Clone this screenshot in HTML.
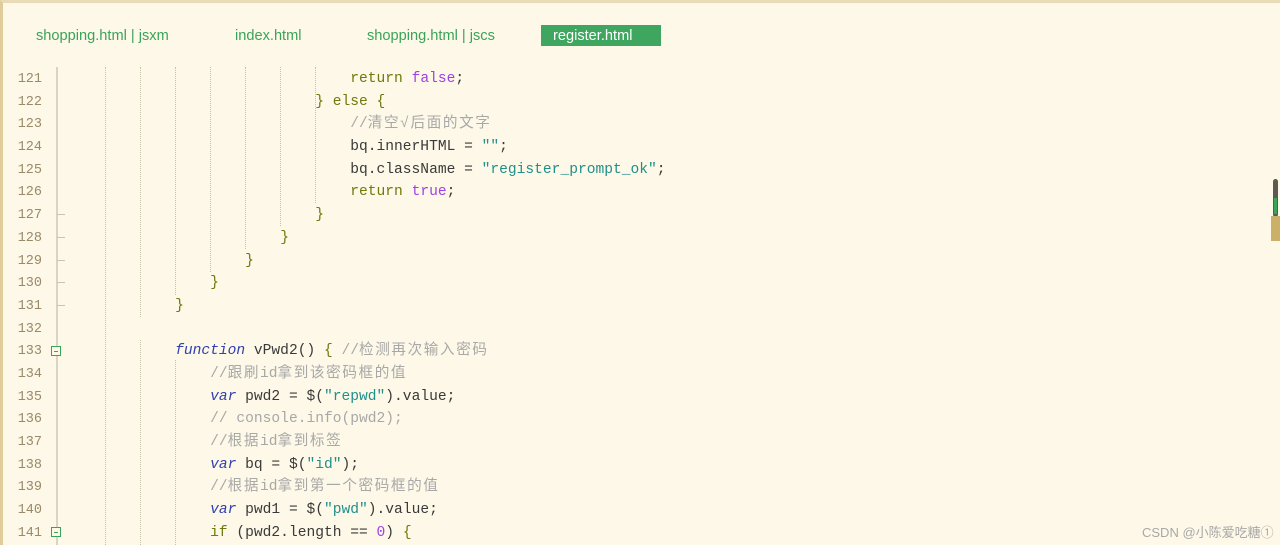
<!DOCTYPE html>
<html><head><meta charset="utf-8"><style>
body{margin:0;width:1280px;height:545px;background:#fdf8e7;overflow:hidden;position:relative;font-family:"Liberation Mono","Noto Sans CJK SC",monospace;}
.frame{position:absolute;left:0;top:0;width:1280px;height:545px;border-top:3px solid #e8dcb8;border-left:3px solid #e0cc98;box-sizing:border-box}
.tab{position:absolute;top:25px;height:21px;line-height:21px;font:14.6px "Liberation Sans","Noto Sans CJK SC",sans-serif;color:#3aa35a}
.tab span{position:relative;top:3px}
.tab.a{background:#3ea65e;color:#fff;padding:0 12px;left:541px;width:96px}
.ln{position:absolute;left:0;width:42px;text-align:right;font-size:13.5px;color:#9a8a6a;height:23px;line-height:23px}
.code{position:absolute;left:70px;font-size:14.6px;height:23px;line-height:23px;white-space:pre;color:#3a3a3a}
.g{position:absolute;width:0;border-left:1px dotted #c8c0a8}
.k{color:#6d7a0c}.p{color:#a040e8}.s{color:#20908a}.c{color:#a8a8a8}.f{color:#3040b0;font-style:italic}.b{color:#6d7a0c}
.z{letter-spacing:1.6px}
.gut{position:absolute;left:56px;top:67px;width:2px;height:478px;background:#d8d4c8}
.tick{position:absolute;left:57px;width:8px;height:1px;background:#c8c4b8}
.fold{position:absolute;left:51px;width:10px;height:10px;border:1px solid #3aa35a;box-sizing:border-box;background:#fdf8e7}
.fold:after{content:"";position:absolute;left:2px;top:3.5px;width:4px;height:1px;background:#3aa35a}
</style></head><body>
<div class="frame"></div>
<div class="tab" style="left:36px"><span>shopping.html | jsxm</span></div>
<div class="tab" style="left:235px"><span>index.html</span></div>
<div class="tab" style="left:367px"><span>shopping.html | jscs</span></div>
<div class="tab a"><span>register.html</span></div>
<div class="gut"></div>
<div class="g" style="left:105px;top:67px;height:478px"></div>
<div class="g" style="left:140px;top:67px;height:250px"></div>
<div class="g" style="left:140px;top:340px;height:205px"></div>
<div class="g" style="left:175px;top:67px;height:228px"></div>
<div class="g" style="left:175px;top:360px;height:185px"></div>
<div class="g" style="left:210px;top:67px;height:205px"></div>
<div class="g" style="left:245px;top:67px;height:182px"></div>
<div class="g" style="left:280px;top:67px;height:159px"></div>
<div class="g" style="left:315px;top:67px;height:136px"></div>

<div class="ln" style="top:68px">121</div><div class="code" style="top:68px">                                <span class="k">return</span> <span class="p">false</span>;</div>
<div class="ln" style="top:91px">122</div><div class="code" style="top:91px">                            <span class="b">}</span> <span class="k">else</span> <span class="b">{</span></div>
<div class="ln" style="top:113px">123</div><div class="code" style="top:113px">                                <span class="c">//<span class="z">清空√后面的文字</span></span></div>
<div class="ln" style="top:136px">124</div><div class="code" style="top:136px">                                bq.innerHTML = <span class="s">""</span>;</div>
<div class="ln" style="top:159px">125</div><div class="code" style="top:159px">                                bq.className = <span class="s">"register_prompt_ok"</span>;</div>
<div class="ln" style="top:181px">126</div><div class="code" style="top:181px">                                <span class="k">return</span> <span class="p">true</span>;</div>
<div class="ln" style="top:204px">127</div><div class="code" style="top:204px">                            <span class="b">}</span></div>
<div class="ln" style="top:227px">128</div><div class="code" style="top:227px">                        <span class="b">}</span></div>
<div class="ln" style="top:250px">129</div><div class="code" style="top:250px">                    <span class="b">}</span></div>
<div class="ln" style="top:272px">130</div><div class="code" style="top:272px">                <span class="b">}</span></div>
<div class="ln" style="top:295px">131</div><div class="code" style="top:295px">            <span class="b">}</span></div>
<div class="ln" style="top:318px">132</div>
<div class="ln" style="top:340px">133</div><div class="code" style="top:340px">            <span class="f">function</span> vPwd2() <span class="b">{</span> <span class="c">//<span class="z">检测再次输入密码</span></span></div>
<div class="ln" style="top:363px">134</div><div class="code" style="top:363px">                <span class="c">//<span class="z">跟刷</span>id<span class="z">拿到该密码框的值</span></span></div>
<div class="ln" style="top:386px">135</div><div class="code" style="top:386px">                <span class="f">var</span> pwd2 = $(<span class="s">"repwd"</span>).value;</div>
<div class="ln" style="top:408px">136</div><div class="code" style="top:408px">                <span class="c">// console.info(pwd2);</span></div>
<div class="ln" style="top:431px">137</div><div class="code" style="top:431px">                <span class="c">//<span class="z">根据</span>id<span class="z">拿到标签</span></span></div>
<div class="ln" style="top:454px">138</div><div class="code" style="top:454px">                <span class="f">var</span> bq = $(<span class="s">"id"</span>);</div>
<div class="ln" style="top:476px">139</div><div class="code" style="top:476px">                <span class="c">//<span class="z">根据</span>id<span class="z">拿到第一个密码框的值</span></span></div>
<div class="ln" style="top:499px">140</div><div class="code" style="top:499px">                <span class="f">var</span> pwd1 = $(<span class="s">"pwd"</span>).value;</div>
<div class="ln" style="top:522px">141</div><div class="code" style="top:522px">                <span class="k">if</span> (pwd2.length == <span class="p">0</span>) <span class="b">{</span></div>

<div class="tick" style="top:214px"></div><div class="tick" style="top:237px"></div><div class="tick" style="top:260px"></div><div class="tick" style="top:282px"></div><div class="tick" style="top:305px"></div>
<div class="fold" style="top:346px"></div><div class="fold" style="top:527px"></div>

<div style="position:absolute;left:1273px;top:179px;width:5px;height:38px;background:#5a5a52;border-radius:3px"></div>
<div style="position:absolute;left:1274px;top:198px;width:3px;height:16px;background:#3aa35a"></div>
<div style="position:absolute;left:1271px;top:216px;width:9px;height:25px;background:#cdb068"></div>
<div style="position:absolute;left:1142px;top:522px;font:13px 'Liberation Sans','Noto Sans CJK SC',sans-serif;color:#a8a8a8">CSDN @小陈爱吃糖①</div>
</body></html>
